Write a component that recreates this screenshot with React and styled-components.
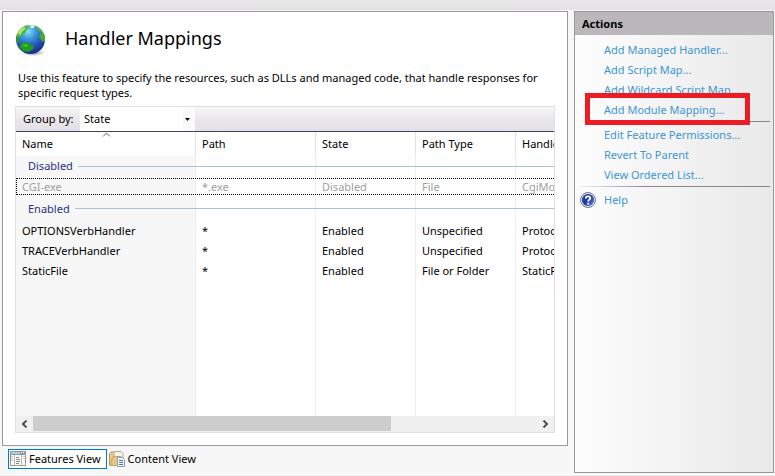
import React from "react";
import styled, { createGlobalStyle } from "styled-components";

const Global = createGlobalStyle`
  * { box-sizing: border-box; }
  body { margin: 0; }
  body, button, select { font-family: "Noto Sans", "Open Sans", sans-serif; font-size: 11px; line-height: 16px; color: #000; }
`;

const Page = styled.div`
  display: flex;
  flex-direction: column;
  height: 100vh;
  background: #f7f7f7;
`;
const TopStrip = styled.div`
  flex: none;
  height: 10px;
  background: linear-gradient(#e8e7e8, #e4e2e4);
`;
const Body = styled.div`
  flex: 1;
  display: flex;
  gap: 6px;
  min-height: 0;
  padding: 1px 1px 1px 2px;
`;
const BottomEdge = styled.div`
  flex: none;
  height: 2px;
  background: #ececec;
  border-top: 1px solid #fff;
`;
const Main = styled.main`
  flex: 1;
  display: flex;
  flex-direction: column;
  min-width: 0;
`;
const Panel = styled.section`
  flex: 1;
  display: flex;
  flex-direction: column;
  min-height: 0;
  padding: 12px;
  background: #fff;
  border: 1px solid #999;
`;
const TitleRow = styled.header`
  display: flex;
  gap: 17px;
  height: 34px;
`;
const Title = styled.h1`
  margin: 0;
  font-size: 18px;
  line-height: 28px;
  font-weight: 400;
`;
const Description = styled.p`
  margin: 12px -8px 6px 0;
  padding: 0 0 0 3px;
  line-height: 15px;
`;
const ListBox = styled.div`
  flex: 1;
  display: flex;
  flex-direction: column;
  min-height: 0;
  border: 1px solid #e0dfe1;
`;
const Toolbar = styled.div`
  flex: none;
  display: flex;
  height: 25px;
  padding-left: 7px;
  background: linear-gradient(#f8f8f8, #e7e5e7 60%, #e3e1e3);
  border-bottom: 1px solid #41406a;
`;
const GroupLabel = styled.label`
  width: 57px;
  line-height: 24px;
  white-space: nowrap;
`;
const SelectWrap = styled.div`
  position: relative;
  width: 115px;
  background: #fff;
`;
const Select = styled.select`
  width: 100%;
  height: 24px;
  padding: 0 4px;
  border: 0;
  border-radius: 0;
  appearance: none;
  background: linear-gradient(90deg, #fff 103px, #fafafa 103px);
`;
const SelectArrow = styled.svg`
  position: absolute;
  right: 4px;
  top: 11px;
  pointer-events: none;
`;
const TableArea = styled.div`
  flex: 1;
  min-height: 0;
  overflow: hidden;
`;
const Table = styled.table`
  width: 620px;
  height: 100%;
  table-layout: fixed;
  border-spacing: 0;
`;
const Col = styled.col`
  width: ${(p) => p.$width};
`;
const HeadCell = styled.th`
  position: relative;
  height: 24px;
  padding: 0 6px;
  border-right: 1px solid #e2e1e4;
  text-align: left;
  font-weight: 400;
`;
const SortMark = styled.svg`
  position: absolute;
  left: 86px;
  top: 0;
`;
const Cell = styled.td`
  padding: 0 6px;
  border-right: 1px solid #e9eef8;
  white-space: nowrap;
  &:first-child { background: #f7f7f7; }
`;
const Row = styled.tr`
  height: ${(p) => (p.$selected ? "17px" : "20px")};
  color: ${(p) => (p.$selected ? "#a0a0a0" : "#000")};
  outline: ${(p) => (p.$selected ? "1px dotted #000" : "none")};
  outline-offset: -1px;
  & > td { line-height: 15px; }
`;
const FillRow = styled.tr`
  height: auto;
`;
const GroupRow = styled.tr`
  height: ${(p) => p.$height};
`;
const GroupCell = styled.th`
  padding: 2px 0 0 12px;
  vertical-align: ${(p) => p.$align};
  font-weight: 400;
  color: #1f3287;
  background: linear-gradient(90deg, #f7f7f7 179px, #e9eef8 179px 180px, #fff 180px 299px, #e9eef8 299px 300px, #fff 300px 399px, #e9eef8 399px 400px, #fff 400px 499px, #e9eef8 499px 500px, #fff 500px);
`;
const GroupTitle = styled.div`
  display: flex;
  align-items: center;
  gap: 5px;
  line-height: 16px;
  &::after { content: ""; flex: 1; height: 1px; background: #b0bfdd; }
`;
const ScrollBar = styled.div`
  flex: none;
  display: flex;
  height: 16px;
  background: #f0f0f0;
`;
const ScrollButton = styled.button`
  display: grid;
  place-items: center;
  width: 17px;
  padding: 0;
  border: 0;
  background: none;
`;
const Track = styled.div`
  flex: 1;
`;
const Thumb = styled.div`
  width: 71%;
  height: 15px;
  background: #cdcdcd;
`;
const ViewTabs = styled.nav`
  flex: none;
  display: flex;
  align-items: flex-start;
  gap: 2px;
  height: 27px;
  padding: 3px 0 0 6px;
`;
const ViewTab = styled.button`
  display: flex;
  align-items: center;
  gap: 3px;
  height: 20px;
  padding: 0 ${(p) => (p.$active ? "5px" : "0")} 0 ${(p) => (p.$active ? "1px" : "0")};
  border: ${(p) => (p.$active ? "1px solid #0078d7" : "0")};
  background: ${(p) => (p.$active ? "#fff" : "none")};
  white-space: nowrap;
`;
const Actions = styled.aside`
  flex: none;
  width: 200px;
  border: 1px solid #999;
  background: linear-gradient(90deg, #fdfdfd, #e9e9e9);
`;
const ActionsTitle = styled.h2`
  margin: 0 0 5px;
  padding: 0 7px;
  font-size: 11px;
  line-height: 23px;
  font-weight: 700;
  background: #bab8bb;
`;
const ActionList = styled.ul`
  margin: 0;
  padding: 0 3px 0 2px;
  list-style: none;
`;
const ActionItem = styled.li`
  position: relative;
  display: flex;
  align-items: center;
  height: 20px;
  padding-left: 3px;
`;
const ActionIcon = styled.span`
  display: flex;
  width: 24px;
`;
const ActionLink = styled.a`
  color: #3c96d4;
  text-decoration: none;
  white-space: nowrap;
`;
const Highlight = styled.span`
  position: absolute;
  left: 8px;
  top: -7px;
  width: 165px;
  height: 32px;
  border: 5px solid #ed1c24;
  z-index: 1;
  pointer-events: none;
`;
const Separator = styled.li`
  height: 1px;
  margin: 1px 0 3px;
  background: linear-gradient(90deg, #f6f6f6, #8c8c8c 35%, #858585);
`;

function Globe() {
  return (
    <svg width="33" height="34" viewBox="0 0 33 34" aria-hidden="true">
      <defs>
        <radialGradient id="sea" cx="0.42" cy="0.22" r="0.8">
          <stop offset="0" stopColor="#8fe0f5" />
          <stop offset="0.3" stopColor="#3f9fdd" />
          <stop offset="0.65" stopColor="#2555bd" />
          <stop offset="1" stopColor="#14287e" />
        </radialGradient>
        <radialGradient id="shade">
          <stop offset="0" stopColor="#555" stopOpacity="0.8" />
          <stop offset="1" stopColor="#999" stopOpacity="0" />
        </radialGradient>
        <clipPath id="ball"><circle cx="15.5" cy="15.5" r="14.5" /></clipPath>
      </defs>
      <ellipse cx="18" cy="28.5" rx="13" ry="4" fill="url(#shade)" />
      <circle cx="15.5" cy="15.5" r="14.5" fill="url(#sea)" />
      <g clipPath="url(#ball)">
        <path d="M0 14 1 7 7 1l6-1-1 3 2 1-3 2-1 3-3 1-2 4-3-1z" fill="#49b52f" />
        <path d="M4 6l5-3 2 1-3 3-3 4-2-1z" fill="#b5e66c" />
        <path d="M15 1l5 0-1 3-3 0z" fill="#d5f5dc" />
        <path d="M20 1l5 3 3 5-3-1-4-4z" fill="#53b63a" />
        <path d="M26 8l3 0 2 5-1 5-3-1-3-4z" fill="#49a934" />
        <path d="M6 20l4-2 4 1 2 2 3 1-1 3-4 3-6-1-4-4z" fill="#219a20" />
        <path d="M7 21l4-1 3 2-4 1z" fill="#54b93a" />
        <path d="M1 13l3 2 0 4-3-1z" fill="#2e992c" />
      </g>
    </svg>
  );
}

function HelpIcon() {
  return (
    <svg width="16" height="16" viewBox="0 0 16 16" aria-hidden="true">
      <defs>
        <linearGradient id="help" x2="1" y2="1">
          <stop stopColor="#26439d" />
          <stop offset="0.5" stopColor="#1d3ba0" />
          <stop offset="1" stopColor="#5c8de8" />
        </linearGradient>
      </defs>
      <circle cx="8" cy="8" r="7.5" fill="#d9dbe2" stroke="#777b8a" />
      <circle cx="8" cy="8" r="6" fill="url(#help)" />
      <path d="M5.8 6.5C5.8 3.6 10.4 3.7 10.3 6.1 10.2 7.8 8.1 7.7 8.1 9.6" fill="none" stroke="#fff" strokeWidth="1.7" />
      <rect x="7.2" y="10.7" width="1.8" height="1.8" fill="#fff" />
    </svg>
  );
}

function FeaturesIcon() {
  return (
    <svg width="16" height="16" viewBox="0 0 16 16" shapeRendering="crispEdges" aria-hidden="true">
      <path d="M0 0h16v15H0z" fill="#999" />
      <path d="M1 4h14v10H1z" fill="#fafaf7" />
      <path d="M0 0h16v4H0z" fill="#8f9cae" />
      <path d="M1 1h9v2H1z" fill="#bac7d8" />
      <path d="M11 1h1v1h-1zM13 1h1v1h-1z" fill="#fff" />
      <path d="M4 4h1v10H4zM11 4h1v10h-1z" fill="#bbb" />
      <path d="M1 5h2v1H1zM1 7h2v1H1zM1 9h2v1H1zM13 5h2v1h-2zM13 7h2v1h-2z" fill="#c8c4b8" />
      <path d="M6 6h3v1H6zM6 8h4v1H6zM6 10h4v1H6zM6 12h3v1H6z" fill="#888" />
    </svg>
  );
}

function ContentIcon() {
  return (
    <svg width="16" height="16" viewBox="0 0 16 16" aria-hidden="true">
      <path d="M.5 14V3L2 1h4l1 2h6v8z" fill="#eac98a" stroke="#b89a62" />
      <path d="M5 .5h7l2 2V9H5z" fill="#f6f3ea" stroke="#b4a98e" />
      <path d="M1 14.5L4 5.5h8l-2 9z" fill="#e8c680" stroke="#c8a764" />
      <path d="M8.5 6.5h5l2 2v7h-7z" fill="#f7fbff" stroke="#8a9bb0" />
      <path d="M10 9.5h4M10 11.5h4M10 13.5h4" stroke="#3a76b8" />
    </svg>
  );
}

const columns = ["Name", "Path", "State", "Path Type", "Handler"];
const enabledRows = [
  ["OPTIONSVerbHandler", "*", "Enabled", "Unspecified", "ProtocolSupportModule"],
  ["TRACEVerbHandler", "*", "Enabled", "Unspecified", "ProtocolSupportModule"],
  ["StaticFile", "*", "Enabled", "File or Folder", "StaticFileModule"],
];

function DataRow({ values, selected }) {
  return (
    <Row $selected={selected}>
      {values.map((v, i) => <Cell key={i}>{v}</Cell>)}
    </Row>
  );
}

function Group({ name, height, align }) {
  return (
    <GroupRow $height={height}>
      <GroupCell colSpan={5} scope="rowgroup" $align={align}><GroupTitle>{name}</GroupTitle></GroupCell>
    </GroupRow>
  );
}

function Action({ label, icon, highlighted }) {
  return (
    <ActionItem>
      <ActionIcon>{icon}</ActionIcon>
      <ActionLink href="#">{label}</ActionLink>
      {highlighted && <Highlight />}
    </ActionItem>
  );
}

export default function App() {
  return (
    <Page>
      <Global />
      <TopStrip />
      <Body>
        <Main>
          <Panel>
            <TitleRow>
              <Globe />
              <Title>Handler Mappings</Title>
            </TitleRow>
            <Description>
              Use this feature to specify the resources, such as DLLs and managed code, that handle responses for specific request types.
            </Description>
            <ListBox>
              <Toolbar>
                <GroupLabel htmlFor="group-by">Group by:</GroupLabel>
                <SelectWrap>
                  <Select id="group-by" defaultValue="State"><option>State</option></Select>
                  <SelectArrow width="7" height="4" viewBox="0 0 7 4"><path d="M1 0h5L3.5 3z" /></SelectArrow>
                </SelectWrap>
              </Toolbar>
              <TableArea>
                <Table>
                  <colgroup>
                    <Col $width="180px" /><Col $width="120px" /><Col $width="100px" /><Col $width="100px" /><Col $width="120px" />
                  </colgroup>
                  <thead>
                    <tr>
                      {columns.map((c, i) => (
                        <HeadCell key={c} scope="col">
                          {c}
                          {i === 0 && (
                            <SortMark width="9" height="5" viewBox="0 0 9 5"><path d="M1 4.5 4.5 1 8 4.5" fill="none" stroke="#666" /></SortMark>
                          )}
                        </HeadCell>
                      ))}
                    </tr>
                  </thead>
                  <tbody>
                    <Group name="Disabled" height="22px" align="top" />
                    <DataRow selected values={["CGI-exe", "*.exe", "Disabled", "File", "CgiModule"]} />
                    <Group name="Enabled" height="25px" align="middle" />
                    {enabledRows.map((r) => <DataRow key={r[0]} values={r} />)}
                    <FillRow>{columns.map((c) => <Cell key={c} />)}</FillRow>
                  </tbody>
                </Table>
              </TableArea>
              <ScrollBar>
                <ScrollButton aria-label="Scroll left">
                  <svg width="7" height="8" viewBox="0 0 7 8"><path d="M5.5 .5 2 4l3.5 3.5" fill="none" stroke="#505050" strokeWidth="2" /></svg>
                </ScrollButton>
                <Track><Thumb /></Track>
                <ScrollButton aria-label="Scroll right">
                  <svg width="7" height="8" viewBox="0 0 7 8"><path d="M1.5 .5 5 4 1.5 7.5" fill="none" stroke="#505050" strokeWidth="2" /></svg>
                </ScrollButton>
              </ScrollBar>
            </ListBox>
          </Panel>
          <ViewTabs>
            <ViewTab $active><FeaturesIcon />Features View</ViewTab>
            <ViewTab><ContentIcon />Content View</ViewTab>
          </ViewTabs>
        </Main>
        <Actions>
          <ActionsTitle>Actions</ActionsTitle>
          <ActionList>
            <Action label="Add Managed Handler..." />
            <Action label="Add Script Map..." />
            <Action label="Add Wildcard Script Map..." />
            <Action label="Add Module Mapping..." highlighted />
            <Separator />
            <Action label="Edit Feature Permissions..." />
            <Action label="Revert To Parent" />
            <Action label="View Ordered List..." />
            <Separator />
            <Action label="Help" icon={<HelpIcon />} />
          </ActionList>
        </Actions>
      </Body>
      <BottomEdge />
    </Page>
  );
}
